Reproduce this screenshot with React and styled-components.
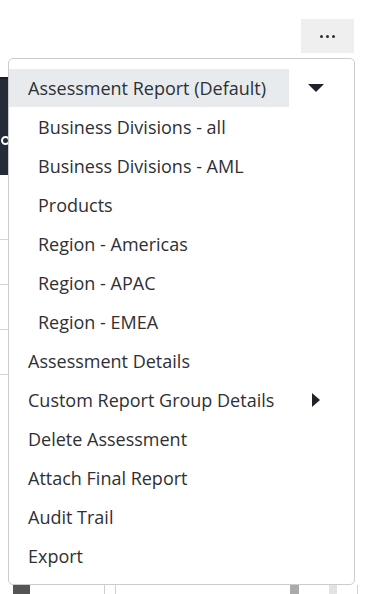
import React from 'react'
import styled, { createGlobalStyle } from 'styled-components'

const GlobalStyle = createGlobalStyle`
  html, body {
    margin: 0;
    padding: 0;
    background: #ffffff;
  }
  body {
    font-family: 'Open Sans', 'Noto Sans', sans-serif;
    color: #2b2d31;
  }
`

const Page = styled.div`
  position: relative;
  width: 365px;
  height: 594px;
  overflow: hidden;
  background: #ffffff;
`

const TopBar = styled.div`
  display: flex;
  justify-content: flex-end;
  padding: 19px 11px 0 0;
  height: 34px;
`

const MoreButton = styled.button`
  width: 53px;
  height: 34px;
  border: none;
  border-radius: 0;
  background: #efefef;
  display: flex;
  align-items: center;
  justify-content: center;
  gap: 3px;
  padding: 0;
  cursor: pointer;
`

const Dot = styled.span`
  width: 3px;
  height: 3px;
  border-radius: 50%;
  background: #2b2d31;
`

const Content = styled.div`
  display: flex;
  flex-direction: column;
  padding-top: 24px;
`

const DarkCard = styled.div`
  position: relative;
  width: 40px;
  height: 98px;
  background: #262b3a;
  border-top: 2px solid #1b1e28;
  box-sizing: border-box;
`

const CardDot = styled.span`
  position: absolute;
  left: 1px;
  top: 57px;
  width: 5px;
  height: 5px;
  border: 2px solid #ffffff;
  border-radius: 50%;
`

const TableRows = styled.div`
  display: flex;
  flex-direction: column;
  margin-top: 20px;
`

const TableRow = styled.div`
  height: 44px;
  border-bottom: 1px solid #d6d6d6;
  width: 40px;
`

const BottomRow = styled.div`
  position: absolute;
  left: 0;
  right: 0;
  top: 585px;
  height: 9px;
  display: flex;
  align-items: flex-start;
`

const Swatch = styled.span`
  display: block;
  height: 9px;
  width: ${(p) => p.$w}px;
  margin-left: ${(p) => p.$ml}px;
  background: ${(p) => p.$c};
`

const BottomLine = styled.span`
  display: block;
  width: 1px;
  height: 9px;
  margin-left: ${(p) => p.$ml}px;
  background: #cfcfcf;
`

const Menu = styled.ul`
  position: absolute;
  left: 8px;
  top: 58px;
  width: 347px;
  box-sizing: border-box;
  margin: 0;
  padding: 9px 0;
  list-style: none;
  background: #ffffff;
  border: 1px solid #cccccc;
  border-radius: 5px;
`

const Item = styled.li`
  display: flex;
  align-items: center;
  height: 39px;
`

const Label = styled.span`
  display: flex;
  align-items: center;
  height: 38px;
  width: 280px;
  box-sizing: border-box;
  padding-left: ${(p) => (p.$sub ? 29 : 19)}px;
  font-size: 18px;
  color: #2e3035;
  background: ${(p) => (p.$active ? '#e8ebee' : 'transparent')};
  white-space: nowrap;
`

const Caret = styled.span`
  display: flex;
  align-items: center;
  justify-content: center;
  flex: 1;
  height: 38px;
  padding-right: 12px;
`

const caretDown = (
  <svg width="16" height="8" viewBox="0 0 16 8">
    <path d="M0 0 L16 0 L8 8 Z" fill="#1f2229" />
  </svg>
)

const caretRight = (
  <svg width="8" height="14" viewBox="0 0 8 14">
    <path d="M0 0 L8 7 L0 14 Z" fill="#1f2229" />
  </svg>
)

const items = [
  { label: 'Assessment Report (Default)', active: true, caret: caretDown },
  { label: 'Business Divisions - all', sub: true },
  { label: 'Business Divisions - AML', sub: true },
  { label: 'Products', sub: true },
  { label: 'Region - Americas', sub: true },
  { label: 'Region - APAC', sub: true },
  { label: 'Region - EMEA', sub: true },
  { label: 'Assessment Details' },
  { label: 'Custom Report Group Details', caret: caretRight },
  { label: 'Delete Assessment' },
  { label: 'Attach Final Report' },
  { label: 'Audit Trail' },
  { label: 'Export' },
]

export default function App() {
  return (
    <Page>
      <GlobalStyle />
      <TopBar>
        <MoreButton aria-label="More actions">
          <Dot />
          <Dot />
          <Dot />
        </MoreButton>
      </TopBar>
      <Content>
        <DarkCard>
          <CardDot />
        </DarkCard>
        <TableRows>
          <TableRow />
          <TableRow />
          <TableRow />
          <TableRow />
        </TableRows>
      </Content>
      <BottomRow>
        <Swatch $w={17} $ml={13} $c="#555555" />
        <BottomLine $ml={74} />
        <BottomLine $ml={10} />
        <Swatch $w={9} $ml={174} $c="#aaaaaa" />
        <Swatch $w={8} $ml={30} $c="#e3e3e3" />
        <BottomLine $ml={20} />
      </BottomRow>
      <Menu>
        {items.map((it) => (
          <Item key={it.label}>
            <Label $sub={it.sub} $active={it.active}>
              {it.label}
            </Label>
            {it.caret && <Caret>{it.caret}</Caret>}
          </Item>
        ))}
      </Menu>
    </Page>
  )
}
